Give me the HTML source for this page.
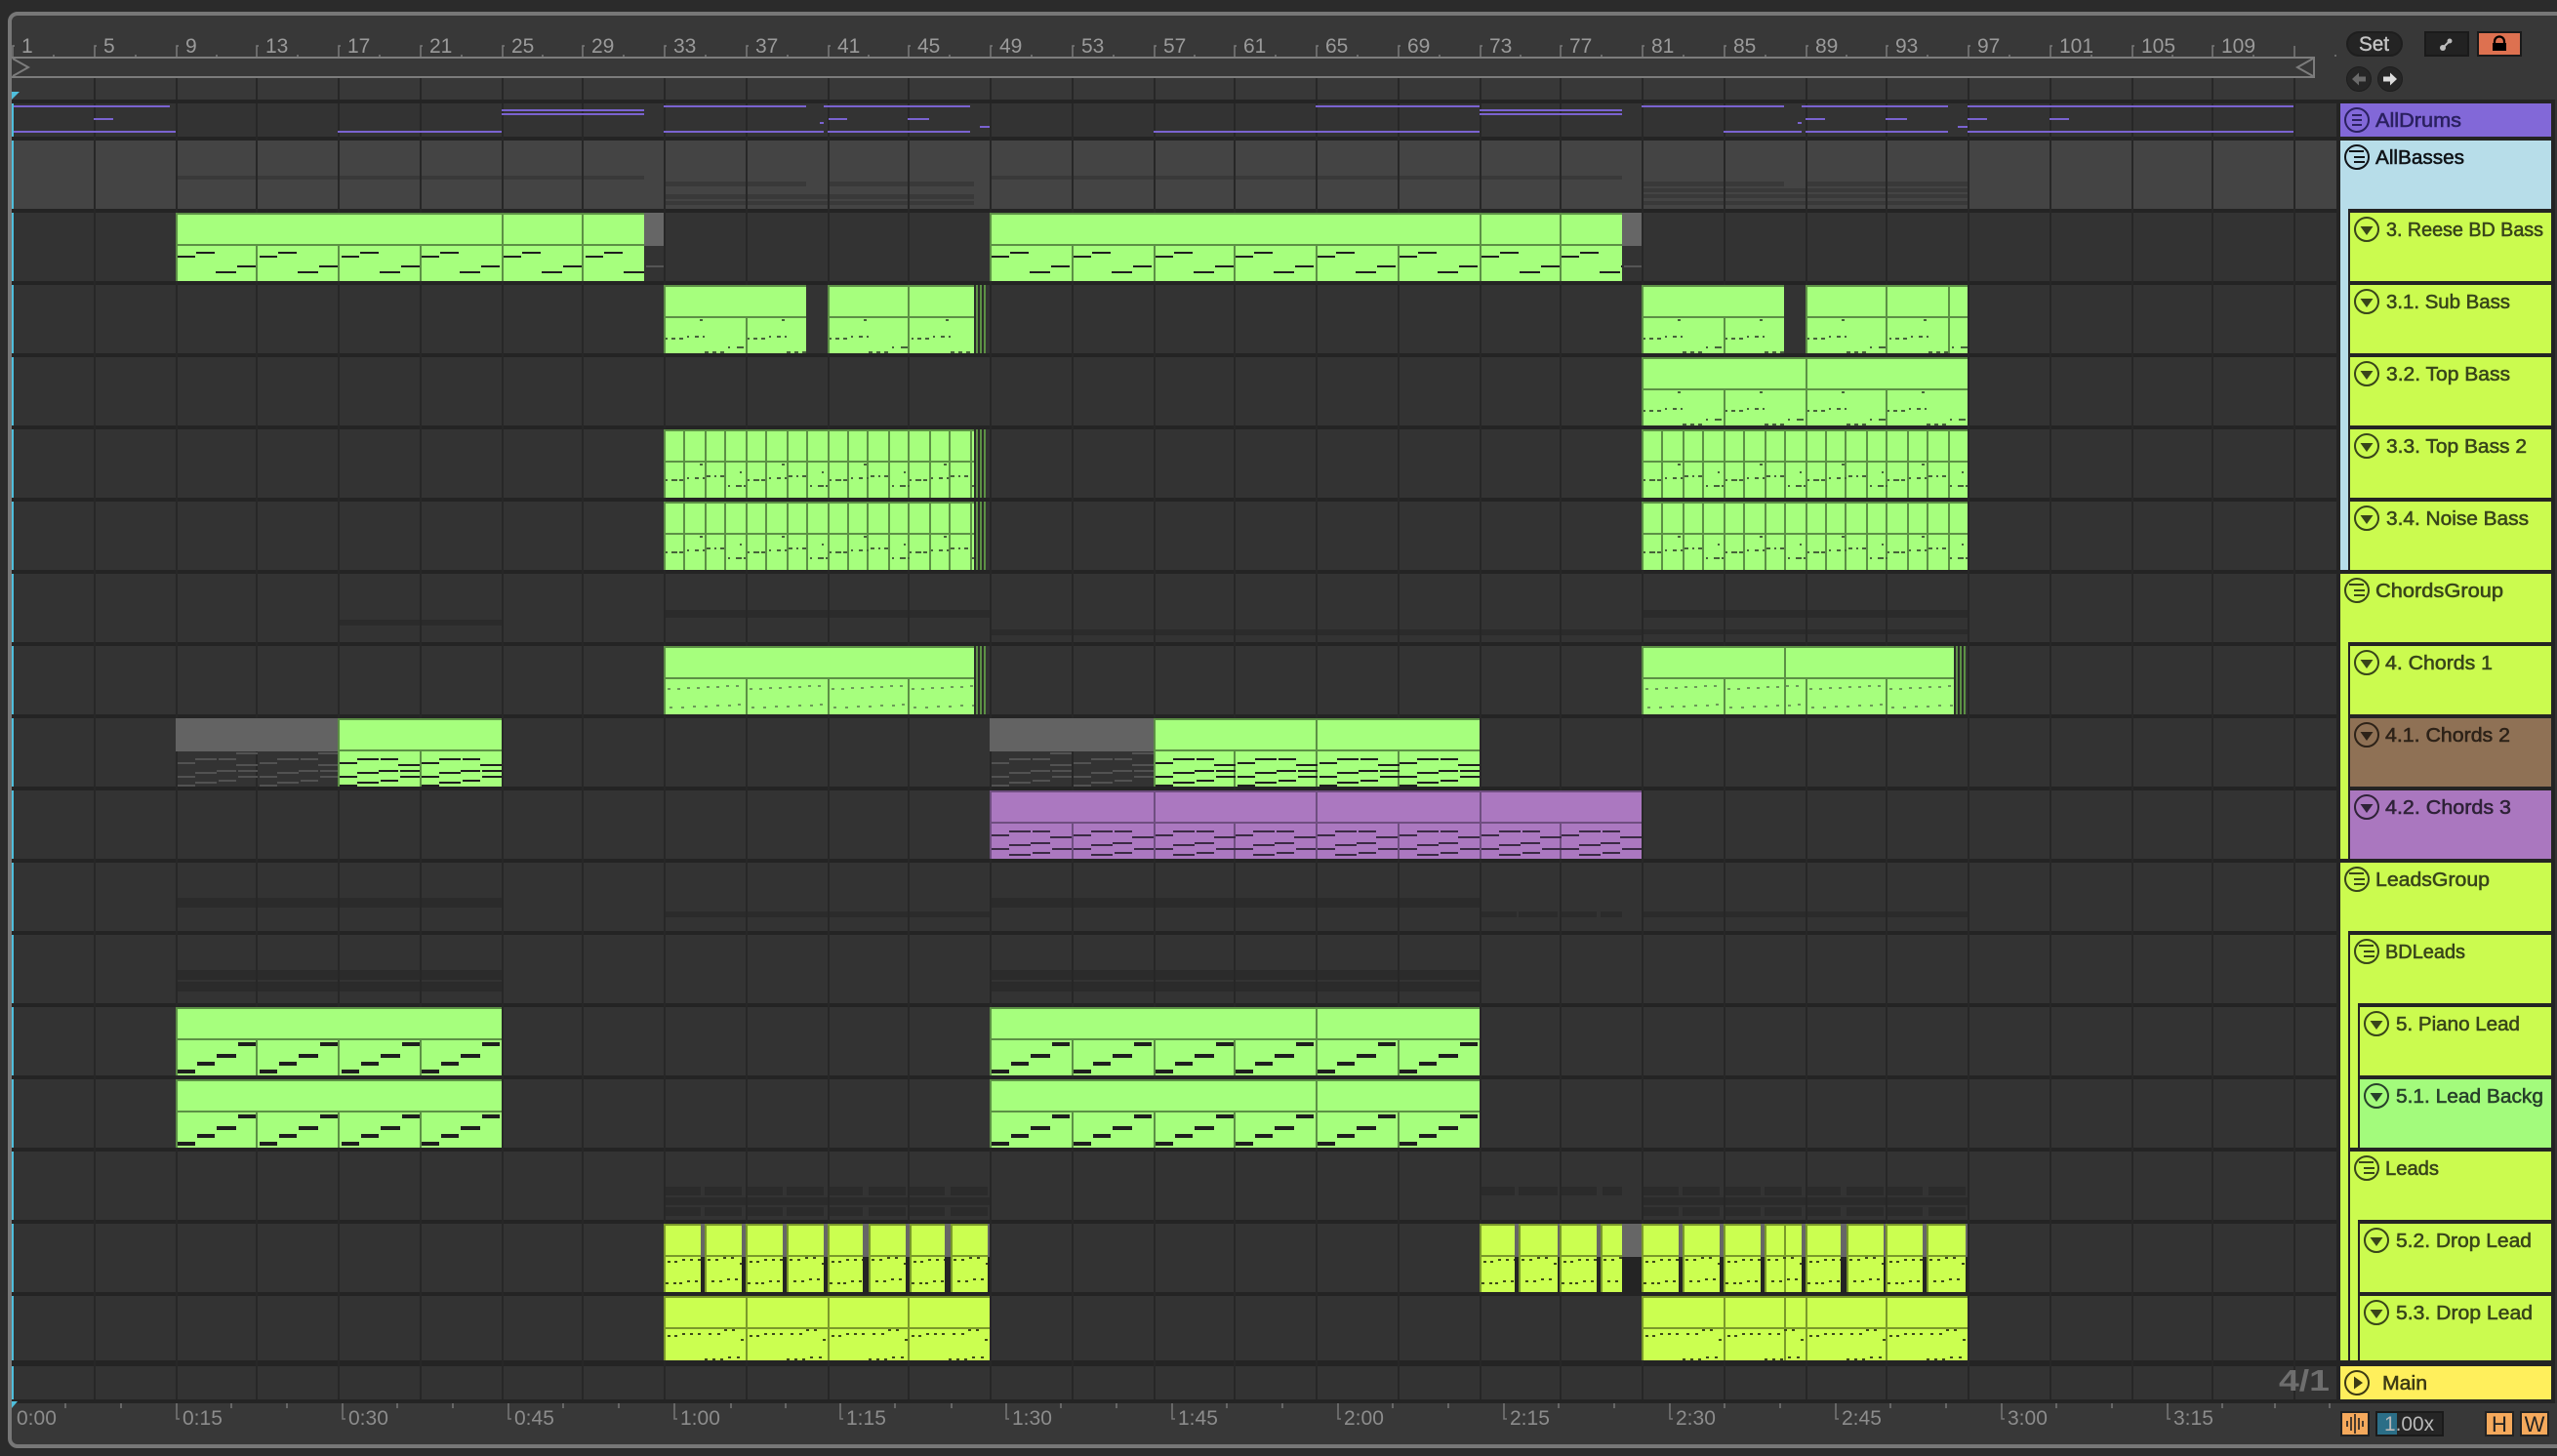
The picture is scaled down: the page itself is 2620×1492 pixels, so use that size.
<!DOCTYPE html>
<html lang="en"><head><meta charset="utf-8"><title>Arrangement</title>
<style>
html,body{margin:0;padding:0;background:#2b2b2b;width:2620px;height:1492px;overflow:hidden}
svg{display:block}
text{font-family:"Liberation Sans",sans-serif}
.g{--f:#a6ff7d;--b:#5c9045;--n:#1e1e1e;--s:#46633a;--e:#6b9a58}
.l{--f:#cbff50;--b:#7a9a2a;--n:#2a3312;--s:#3c4a18;--e:#3c4a18}
.p{--f:#ab78c0;--b:#6f4e80;--n:#3a2a44;--s:#2d2230;--e:#2d2230}
.x{--n:#525252;--s:#525252}
.f{fill:var(--f)}.b{fill:var(--b)}
path.v{fill:none;stroke:var(--b);stroke-width:2}
path.n{fill:none;stroke:var(--n);stroke-width:2}
path.n4{fill:none;stroke:var(--n);stroke-width:4}
path.s{fill:none;stroke:var(--s);stroke-width:2}
path.e{fill:none;stroke:var(--e);stroke-width:2}
.i{fill:none;stroke:currentColor;stroke-width:2}
.t{font-size:20px;font-weight:normal;stroke:currentColor;stroke-width:.55px}
.r{font-size:21px;fill:#9a9a9a}
.m{font-size:21px;fill:#8c8c8c}
.tl{color:#38451a;fill:#38451a}
</style></head><body>
<svg width="2620" height="1492" viewBox="0 0 2620 1492" xmlns="http://www.w3.org/2000/svg">
<defs>
<g id="c"><rect class="b" width="100%" height="100%"/><rect class="f" x="2" y="2" width="100%" height="30"/><rect class="f" x="2" y="34" width="100%" height="36"/></g>
<g id="a"><path id="a1" class="n" d="M2 45h18M21 41h19M41 61h21M63 55h19"/><use href="#a1" x="84"/><use href="#a1" x="168"/><use href="#a1" x="250"/><use href="#a1" x="334"/><use href="#a1" x="418"/><use href="#a1" x="502"/><use href="#a1" x="584"/></g>
<g id="h"><path id="h1" class="n" d="M20 42h22M44 42h18M2 46h18M62 48h22M42 54h20M20 56h22M64 54h20M2 60h18M64 60h20M44 64h18M20 66h22M2 69h18"/><use href="#h1" x="84"/><use href="#h1" x="168"/><use href="#h1" x="250"/><use href="#h1" x="334"/><use href="#h1" x="418"/><use href="#h1" x="502"/><use href="#h1" x="584"/></g>
<g id="hp"><path id="hp1" class="n" d="M20 42h22M44 42h18M2 46h18M62 48h22M42 54h20M20 56h22M2 60h18M64 60h20M44 64h18M20 66h22"/><use href="#hp1" x="84"/><use href="#hp1" x="168"/><use href="#hp1" x="250"/><use href="#hp1" x="334"/><use href="#hp1" x="418"/><use href="#hp1" x="502"/><use href="#hp1" x="584"/></g>
<g id="pn"><path id="p1" class="n4" d="M64 38h18M42 50h20M22 58h18M2 66h18"/><use href="#p1" x="84"/><use href="#p1" x="168"/><use href="#p1" x="250"/><use href="#p1" x="334"/><use href="#p1" x="418"/></g>
<g id="sp"><path id="s1" class="s" d="M2 55h2M8 55h4M16 55h4M24 53h2M32 53h4M40 53h2M66 64h2M75 64h7M42 69h4M50 69h4M58 69h4M37 36h3"/><use href="#s1" x="84"/><use href="#s1" x="168"/><use href="#s1" x="250"/></g>
<g id="tb"><path id="t1" class="s" d="M2 52h2M8 52h6M16 52h4M24 50h2M32 50h4M40 50h2M44 48h4M52 48h2M58 48h4M66 58h2M74 58h6M82 58h2M37 36h3M78 44h2"/><use href="#t1" x="84"/><use href="#t1" x="168"/><use href="#t1" x="250"/></g>
<g id="ch"><path id="e1" class="e" d="M4 44h3M14 44h3M24 43h3M34 43h3M44 42h3M54 42h3M64 41h3M74 41h3M6 63h3M18 63h3M30 62h3M42 62h3M54 61h3M66 61h3M76 60h3"/><use href="#e1" x="84"/><use href="#e1" x="168"/><use href="#e1" x="250"/></g>
<path id="d1" class="s" d="M4 39h3M11 39h3M19 37h3M27 37h3M35 37h3M2 61h3M10 61h3M16 61h3M24 59h3M32 59h3"/>
<path id="d2" class="s" d="M3 37h3M11 37h3M19 35h3M27 35h3M36 41h3M7 59h3M15 59h3M23 57h3M31 57h3"/>
<g id="q"><path id="q1" class="s" d="M4 41h3M11 41h3M19 39h3M27 39h3M35 39h3M46 39h3M55 39h3M62 35h3M70 35h3M79 45h3M42 65h3M50 65h3M58 65h3M66 63h3M75 63h3"/><use href="#q1" x="84"/><use href="#q1" x="168"/><use href="#q1" x="250"/></g>
<path id="v15" class="v" d="M21 2v68M43 2v68M63 2v68M85 2v68M105 2v68M127 2v68M147 2v68M169 2v68M189 2v68M209 2v68M231 2v68M251 2v68M273 2v68M293 2v68M315 2v68"/>
<g id="st"><rect width="12" height="70" fill="#2a2a2a"/><path d="M3 0v70M7 0v70M11 0v70" stroke="#5c9045" stroke-width="2" fill="none"/></g>
<g id="ig"><circle r="12" class="i"/><path class="i" d="M-8 -6h15M-3 0h11M-3 5h11"/></g>
<g id="ih"><circle r="12" class="i"/><path class="i" d="M-5 -5h10M-5 0h10M-5 5h10"/></g>
<g id="it"><circle r="12" class="i"/><path fill="currentColor" d="M-6.5 -3h13L0 6z"/></g>
<g id="im"><circle r="12" class="i"/><path fill="currentColor" d="M-3 -6.500L6 0L-3 6.500z"/></g>
</defs>

<rect width="2620" height="1492" fill="#2b2b2b"/>
<rect x="10" y="14" width="2700" height="1468" rx="8" fill="#383838" stroke="#777" stroke-width="4"/>

<!-- rows -->
<rect x="12" y="102" width="2382" height="1336" fill="#242424"/>
<path fill="#333" d="M14 106h2380v34H14zM14 218h2380v70H14zM14 292h2380v70H14zM14 366h2380v70H14zM14 440h2380v70H14zM14 514h2380v70H14zM14 588h2380v70H14zM14 662h2380v70H14zM14 736h2380v70H14zM14 810h2380v70H14zM14 884h2380v70H14zM14 958h2380v70H14zM14 1032h2380v70H14zM14 1106h2380v70H14zM14 1180h2380v70H14zM14 1254h2380v70H14zM14 1328h2380v66H14zM14 1400h2380v34H14z"/>
<rect x="14" y="144" width="2380" height="70" fill="#444"/>
<rect x="2618" y="102" width="2" height="1336" fill="#333"/>

<!-- group overlays -->
<g fill="#000" fill-opacity=".15">
<path d="M180 180h480v4H180zM1014 180h648v4h-648zM680 186h146v5H680zM848 186h150v5H848zM1682 186h146v5h-146zM1850 186h166v5h-166zM680 199h318v5H680zM680 206h318v4H680zM1682 193h334v4h-334zM1682 199h334v4h-334zM1682 206h334v4h-334z"/>
<path d="M346 635h168v6H346zM680 625h334v8H680zM1014 645h668v6h-668zM1682 625h334v8h-334zM1682 645h334v5h-334z"/>
<path d="M180 920h334v10H180zM1014 920h502v10h-502zM680 934h334v6H680zM1516 934h38v6h-38zM1556 934h40v6h-40zM1598 934h38v6h-38zM1640 934h22v6h-22zM1682 934h334v6h-334z"/>
<path d="M180 994h334v10H180zM180 1006h334v10H180zM1014 994h502v10h-502zM1014 1006h502v10h-502z"/>
<path d="M680 1227h334v8H680zM1682 1227h334v8h-334z"/>
<path id="ds" d="M680 1216h38v9h-38zM722 1216h38v9h-38zM764 1216h38v9h-38zM806 1216h38v9h-38zM848 1216h36v9h-36zM890 1216h38v9h-38zM932 1216h36v9h-36zM974 1216h38v9h-38z"/>
<use href="#ds" y="21"/>
<path d="M1516 1216h36v9h-36zM1556 1216h40v9h-40zM1598 1216h38v9h-38zM1642 1216h20v9h-20z"/>
<use href="#ds" x="1002"/><use href="#ds" x="1002" y="21"/>
</g>

<!-- grid -->
<path stroke="#272727" stroke-width="2" fill="none" d="M97 80V1434M181 80V1434M263 80V1434M347 80V1434M431 80V1434M515 80V1434M597 80V1434M681 80V1434M765 80V1434M849 80V1434M931 80V1434M1015 80V1434M1099 80V1434M1183 80V1434M1265 80V1434M1349 80V1434M1433 80V1434M1517 80V1434M1599 80V1434M1683 80V1434M1767 80V1434M1851 80V1434M1933 80V1434M2017 80V1434M2101 80V1434M2185 80V1434M2267 80V1434M2351 80V1434"/>
<rect y="102" x="12" width="2382" height="4" fill="#242424"/>
<rect y="1434" x="12" width="2382" height="4" fill="#242424"/>

<!-- playhead -->
<path d="M13 106V140M13 144V214M13 218V288M13 292V362M13 366V436M13 440V510M13 514V584M13 588V658M13 662V732M13 736V806M13 810V880M13 884V954M13 958V1028M13 1032V1102M13 1106V1176M13 1180V1250M13 1254V1324M13 1328V1394M13 1400V1434" stroke="#4fbfdc" stroke-width="2" fill="none"/>
<path d="M12 94h8l-8 8z" fill="#4fbfdc"/>
<path d="M12 1436h6l-6 7z" fill="#4fbfdc"/>

<!-- AllDrums overview -->
<g fill="#7a63d0">
<path d="M14 108h160v2H14zM680 108h146v2H680zM844 108h150v2H844zM1348 108h168v2h-168zM1682 108h146v2h-146zM1846 108h150v2h-150zM2016 108h334v2h-334zM2100 108h250v2h-250z"/>
<path d="M96 121h20v2H96zM849 121h19v2h-19zM930 121h22v2h-22zM1850 121h20v2h-20zM1932 121h22v2h-22zM2016 121h20v2h-20zM2100 121h20v2h-20z"/>
<path d="M840 125h4v2h-4zM1842 125h4v2h-4zM1004 129h10v2h-10zM2006 129h10v2h-10z"/>
<path d="M14 134h166v2H14zM346 134h168v2H346zM680 134h164v2H680zM848 134h146v2H848zM1182 134h334v2h-334zM1766 134h80v2h-80zM1850 134h146v2h-146zM2016 134h334v2h-334z"/>
<path d="M514 112h146v2H514zM514 116h146v2H514zM1516 112h146v2h-146zM1516 116h146v2h-146z"/>
</g>

<!-- R2 -->
<rect x="660" y="218" width="20" height="34" fill="#666"/><rect x="662" y="272" width="18" height="2" fill="#555"/>
<rect x="1662" y="218" width="20" height="34" fill="#666"/><rect x="1664" y="272" width="18" height="2" fill="#555"/>
<svg x="180" y="218" width="480" height="70" class="g"><use href="#c"/><path class="v" d="M335 2v32M417 2v32M83 34v36M167 34v36M251 34v36M335 34v36M417 34v36"/><use href="#a"/></svg>
<svg x="1014" y="218" width="648" height="70" class="g"><use href="#c"/><path class="v" d="M503 2v32M585 2v32M85 34v36M169 34v36M251 34v36M335 34v36M419 34v36M503 34v36M585 34v36"/><use href="#a"/></svg>
<!-- R3 -->
<svg x="680" y="292" width="146" height="70" class="g"><use href="#c"/><path class="v" d="M85 34v36"/><use href="#sp"/></svg>
<svg x="848" y="292" width="150" height="70" class="g"><use href="#c"/><path class="v" d="M83 2v68"/><use href="#sp"/></svg>
<use href="#st" x="998" y="292"/>
<svg x="1682" y="292" width="146" height="70" class="g"><use href="#c"/><path class="v" d="M85 34v36"/><use href="#sp"/></svg>
<svg x="1850" y="292" width="166" height="70" class="g"><use href="#c"/><path class="v" d="M83 2v68M147 2v68"/><use href="#sp"/></svg>
<!-- R4 -->
<svg x="1682" y="366" width="334" height="70" class="g"><use href="#c"/><path class="v" d="M169 2v68M85 34v36M251 34v36"/><use href="#sp"/></svg>
<!-- R5 R6 -->
<svg x="680" y="440" width="318" height="70" class="g"><use href="#c"/><use href="#v15"/><use href="#tb"/></svg>
<use href="#st" x="998" y="440"/>
<svg x="1682" y="440" width="334" height="70" class="g"><use href="#c"/><use href="#v15"/><use href="#tb"/></svg>
<svg x="680" y="514" width="318" height="70" class="g"><use href="#c"/><use href="#v15"/><use href="#tb"/></svg>
<use href="#st" x="998" y="514"/>
<svg x="1682" y="514" width="334" height="70" class="g"><use href="#c"/><use href="#v15"/><use href="#tb"/></svg>
<!-- R8 -->
<svg x="680" y="662" width="318" height="70" class="g"><use href="#c"/><path class="v" d="M85 34v36M169 34v36M251 34v36"/><use href="#ch"/></svg>
<use href="#st" x="998" y="662"/>
<svg x="1682" y="662" width="320" height="70" class="g"><use href="#c"/><path class="v" d="M147 2v68M85 34v36M169 34v36M251 34v36"/><use href="#ch"/></svg>
<use href="#st" x="2002" y="662"/>
<!-- R9 -->
<rect x="180" y="736" width="166" height="34" fill="#636363"/>
<svg x="180" y="736" width="166" height="70" class="x"><use href="#h"/><path class="n" d="M62 36h22M146 36h20"/></svg>
<svg x="346" y="736" width="168" height="70" class="g"><use href="#c"/><path class="v" d="M85 34v36"/><use href="#h"/></svg>
<rect x="1014" y="736" width="168" height="34" fill="#636363"/>
<svg x="1014" y="736" width="168" height="70" class="x"><use href="#h"/><path class="n" d="M62 36h22M146 36h22"/></svg>
<svg x="1182" y="736" width="334" height="70" class="g"><use href="#c"/><path class="v" d="M167 2v32M83 34v36M167 34v36M251 34v36"/><use href="#h"/></svg>
<!-- R10 -->
<svg x="1014" y="810" width="668" height="70" class="p"><use href="#c"/><path class="v" d="M169 2v32M335 2v32M503 2v32M85 34v36M169 34v36M251 34v36M335 34v36M419 34v36M503 34v36M585 34v36"/><use href="#hp"/></svg>
<!-- R13 R14 -->
<svg x="180" y="1032" width="334" height="70" class="g"><use href="#c"/><path class="v" d="M83 34v36M167 34v36M251 34v36"/><use href="#pn"/></svg>
<svg x="1014" y="1032" width="502" height="70" class="g"><use href="#c"/><path class="v" d="M335 2v32M85 34v36M169 34v36M251 34v36M335 34v36M419 34v36"/><use href="#pn"/></svg>
<svg x="180" y="1106" width="334" height="70" class="g"><use href="#c"/><path class="v" d="M83 34v36M167 34v36M251 34v36"/><use href="#pn"/></svg>
<svg x="1014" y="1106" width="502" height="70" class="g"><use href="#c"/><path class="v" d="M335 2v32M85 34v36M169 34v36M251 34v36M335 34v36M419 34v36"/><use href="#pn"/></svg>
<!-- R16 -->
<rect x="680" y="1254" width="334" height="34" fill="#666"/><rect x="680" y="1288" width="334" height="36" fill="#242424"/>
<rect x="1516" y="1254" width="500" height="34" fill="#666"/><rect x="1516" y="1288" width="500" height="36" fill="#242424"/>
<g class="l">
<svg x="680" y="1254" width="38" height="70"><use href="#c"/><use href="#d1"/></svg>
<svg x="722" y="1254" width="38" height="70"><use href="#c"/><use href="#d2"/></svg>
<svg x="764" y="1254" width="38" height="70"><use href="#c"/><use href="#d1"/></svg>
<svg x="806" y="1254" width="38" height="70"><use href="#c"/><use href="#d2"/></svg>
<svg x="848" y="1254" width="36" height="70"><use href="#c"/><use href="#d1"/></svg>
<svg x="890" y="1254" width="38" height="70"><use href="#c"/><use href="#d2"/></svg>
<svg x="932" y="1254" width="36" height="70"><use href="#c"/><use href="#d1"/></svg>
<svg x="974" y="1254" width="38" height="70"><use href="#c"/><use href="#d2"/></svg>
<svg x="1516" y="1254" width="36" height="70"><use href="#c"/><use href="#d1"/></svg>
<svg x="1556" y="1254" width="40" height="70"><use href="#c"/><use href="#d2"/></svg>
<svg x="1598" y="1254" width="38" height="70"><use href="#c"/><use href="#d1"/></svg>
<svg x="1640" y="1254" width="22" height="70"><use href="#c"/><use href="#d2"/></svg>
<svg x="1682" y="1254" width="38" height="70"><use href="#c"/><use href="#d1"/></svg>
<svg x="1724" y="1254" width="38" height="70"><use href="#c"/><use href="#d2"/></svg>
<svg x="1766" y="1254" width="38" height="70"><use href="#c"/><use href="#d1"/></svg>
<svg x="1808" y="1254" width="38" height="70"><use href="#c"/><path class="v" d="M21 2v68"/><use href="#d2"/></svg>
<svg x="1850" y="1254" width="36" height="70"><use href="#c"/><use href="#d1"/></svg>
<svg x="1892" y="1254" width="38" height="70"><use href="#c"/><use href="#d2"/></svg>
<svg x="1932" y="1254" width="38" height="70"><use href="#c"/><use href="#d1"/></svg>
<svg x="1974" y="1254" width="40" height="70"><use href="#c"/><use href="#d2"/></svg>
</g>
<!-- R17 -->
<svg x="680" y="1328" width="334" height="66" class="l"><use href="#c"/><path class="v" d="M85 2v64M169 2v64M251 2v64"/><use href="#q"/></svg>
<svg x="1682" y="1328" width="334" height="66" class="l"><use href="#c"/><path class="v" d="M85 2v64M147 2v64M169 2v64M251 2v64"/><use href="#q"/></svg>

<!-- top ruler -->
<path stroke="#7a7a7a" stroke-width="1.500" fill="none" d="M13 58V47h2M97 58V47h2M181 58V47h2M263 58V47h2M347 58V47h2M431 58V47h2M515 58V47h2M597 58V47h2M681 58V47h2M765 58V47h2M849 58V47h2M931 58V47h2M1015 58V47h2M1099 58V47h2M1183 58V47h2M1265 58V47h2M1349 58V47h2M1433 58V47h2M1517 58V47h2M1599 58V47h2M1683 58V47h2M1767 58V47h2M1851 58V47h2M1933 58V47h2M2017 58V47h2M2101 58V47h2M2185 58V47h2M2267 58V47h2M2351 58V47"/>
<path stroke="#7a7a7a" stroke-width="1.500" fill="none" d="M55 58v-2M139 58v-2M222 58v-2M305 58v-2M389 58v-2M473 58v-2M556 58v-2M639 58v-2M723 58v-2M807 58v-2M890 58v-2M973 58v-2M1057 58v-2M1141 58v-2M1224 58v-2M1307 58v-2M1391 58v-2M1475 58v-2M1558 58v-2M1641 58v-2M1725 58v-2M1809 58v-2M1892 58v-2M1975 58v-2M2059 58v-2M2143 58v-2M2226 58v-2M2309 58v-2M2393 58v-2"/>
<g class="r">
<text x="22" y="54">1</text><text x="106" y="54">5</text><text x="190" y="54">9</text><text x="272" y="54">13</text><text x="356" y="54">17</text><text x="440" y="54">21</text><text x="524" y="54">25</text><text x="606" y="54">29</text><text x="690" y="54">33</text><text x="774" y="54">37</text><text x="858" y="54">41</text><text x="940" y="54">45</text><text x="1024" y="54">49</text><text x="1108" y="54">53</text><text x="1192" y="54">57</text><text x="1274" y="54">61</text><text x="1358" y="54">65</text><text x="1442" y="54">69</text><text x="1526" y="54">73</text><text x="1608" y="54">77</text><text x="1692" y="54">81</text><text x="1776" y="54">85</text><text x="1860" y="54">89</text><text x="1942" y="54">93</text><text x="2026" y="54">97</text><text x="2110" y="54">101</text><text x="2194" y="54">105</text><text x="2276" y="54">109</text>
</g>
<path d="M12 59H2371V79H12" stroke="#7c7c7c" stroke-width="2" fill="none"/>
<path d="M13 60L29 69L13 78" stroke="#7c7c7c" stroke-width="2" fill="none"/>
<path d="M2370 60L2354 69L2370 78" stroke="#7c7c7c" stroke-width="2" fill="none"/>

<!-- bottom ruler -->
<path stroke="#777" stroke-width="1.500" fill="none" d="M181 1438V1454h3M351 1438V1454h3M521 1438V1454h3M691 1438V1454h3M861 1438V1454h3M1031 1438V1454h3M1201 1438V1454h3M1371 1438V1454h3M1541 1438V1454h3M1711 1438V1454h3M1881 1438V1454h3M2051 1438V1454h3M2221 1438V1454h3"/>
<path stroke="#777" stroke-width="1.500" fill="none" d="M67 1438v5M124 1438v5M237 1438v5M294 1438v5M407 1438v5M464 1438v5M577 1438v5M634 1438v5M749 1438v5M805 1438v5M917 1438v5M975 1438v5M1087 1438v5M1144 1438v5M1257 1438v5M1314 1438v5M1427 1438v5M1484 1438v5M1597 1438v5M1654 1438v5M1767 1438v5M1824 1438v5M1937 1438v5M1994 1438v5M2107 1438v5M2164 1438v5M2277 1438v5M2331 1438v5M2387 1438v5"/>
<g class="m">
<text x="17" y="1460">0:00</text><text x="187" y="1460">0:15</text><text x="357" y="1460">0:30</text><text x="527" y="1460">0:45</text><text x="697" y="1460">1:00</text><text x="867" y="1460">1:15</text><text x="1037" y="1460">1:30</text><text x="1207" y="1460">1:45</text><text x="1377" y="1460">2:00</text><text x="1547" y="1460">2:15</text><text x="1717" y="1460">2:30</text><text x="1887" y="1460">2:45</text><text x="2057" y="1460">3:00</text><text x="2227" y="1460">3:15</text>
</g>
<text x="2335" y="1425" font-size="31" font-weight="bold" fill="#6e6e6e" textLength="52" lengthAdjust="spacingAndGlyphs">4/1</text>

<!-- header panel -->
<rect x="2394" y="102" width="224" height="1336" fill="#242424"/>
<rect x="2398" y="106" width="216" height="34" fill="#8268d8"/>
<rect x="2398" y="144" width="216" height="440" fill="#b7dde9"/>
<rect x="2406" y="214" width="208" height="370" fill="#242424"/>
<rect x="2398" y="588" width="216" height="292" fill="#cbfb4f"/>
<rect x="2406" y="658" width="208" height="222" fill="#242424"/>
<rect x="2398" y="884" width="216" height="510" fill="#cbfb4f"/>
<rect x="2406" y="954" width="208" height="440" fill="#242424"/>
<path fill="#cbfb4f" d="M2408 218h206v70h-206zM2408 292h206v70h-206zM2408 366h206v70h-206zM2408 440h206v70h-206zM2408 514h206v70h-206zM2408 662h206v70h-206zM2408 958h206v218h-206zM2408 1180h206v214h-206z"/>
<rect x="2408" y="736" width="206" height="70" fill="#8f7155"/>
<rect x="2408" y="810" width="206" height="70" fill="#aa77bf"/>
<rect x="2416" y="1028" width="198" height="148" fill="#242424"/>
<rect x="2416" y="1250" width="198" height="144" fill="#242424"/>
<rect x="2418" y="1032" width="196" height="70" fill="#cbfb4f"/>
<rect x="2418" y="1106" width="196" height="70" fill="#a3fb7c"/>
<rect x="2418" y="1254" width="196" height="70" fill="#cbfb4f"/>
<rect x="2418" y="1328" width="196" height="66" fill="#cbfb4f"/>
<rect x="2398" y="1400" width="216" height="34" fill="#ffef5c"/>

<g style="color:#2b2160;fill:#2b2160"><use href="#ih" x="2415" y="123"/><text class="t" x="2434" y="130" textLength="88" lengthAdjust="spacingAndGlyphs">AllDrums</text></g>
<g style="color:#101418;fill:#101418"><use href="#ig" x="2415" y="161"/><text class="t" x="2434" y="168" textLength="91" lengthAdjust="spacingAndGlyphs">AllBasses</text></g>
<g class="tl">
<use href="#it" x="2425" y="235"/><text class="t" x="2445" y="242" textLength="161" lengthAdjust="spacingAndGlyphs">3. Reese BD Bass</text>
<use href="#it" x="2425" y="309"/><text class="t" x="2445" y="316" textLength="127" lengthAdjust="spacingAndGlyphs">3.1. Sub Bass</text>
<use href="#it" x="2425" y="383"/><text class="t" x="2445" y="390" textLength="127" lengthAdjust="spacingAndGlyphs">3.2. Top Bass</text>
<use href="#it" x="2425" y="457"/><text class="t" x="2445" y="464" textLength="144" lengthAdjust="spacingAndGlyphs">3.3. Top Bass 2</text>
<use href="#it" x="2425" y="531"/><text class="t" x="2445" y="538" textLength="146" lengthAdjust="spacingAndGlyphs">3.4. Noise Bass</text>
<use href="#ig" x="2415" y="605"/><text class="t" x="2434" y="612" textLength="131" lengthAdjust="spacingAndGlyphs">ChordsGroup</text>
<use href="#it" x="2425" y="679"/><text class="t" x="2444" y="686" textLength="110" lengthAdjust="spacingAndGlyphs">4. Chords 1</text>
<use href="#ig" x="2415" y="901"/><text class="t" x="2434" y="908" textLength="117" lengthAdjust="spacingAndGlyphs">LeadsGroup</text>
<use href="#ig" x="2425" y="975"/><text class="t" x="2444" y="982" textLength="82" lengthAdjust="spacingAndGlyphs">BDLeads</text>
<use href="#it" x="2435" y="1049"/><text class="t" x="2455" y="1056" textLength="127" lengthAdjust="spacingAndGlyphs">5. Piano Lead</text>
<use href="#ig" x="2425" y="1197"/><text class="t" x="2444" y="1204" textLength="55" lengthAdjust="spacingAndGlyphs">Leads</text>
<use href="#it" x="2435" y="1271"/><text class="t" x="2455" y="1278" textLength="139" lengthAdjust="spacingAndGlyphs">5.2. Drop Lead</text>
<use href="#it" x="2435" y="1345"/><text class="t" x="2455" y="1352" textLength="140" lengthAdjust="spacingAndGlyphs">5.3. Drop Lead</text>
</g>
<g style="color:#2d2218;fill:#2d2218"><use href="#it" x="2425" y="753"/><text class="t" x="2444" y="760" textLength="128" lengthAdjust="spacingAndGlyphs">4.1. Chords 2</text></g>
<g style="color:#2f2238;fill:#2f2238"><use href="#it" x="2425" y="827"/><text class="t" x="2444" y="834" textLength="129" lengthAdjust="spacingAndGlyphs">4.2. Chords 3</text></g>
<g style="color:#27402a;fill:#27402a"><use href="#it" x="2435" y="1123"/><text class="t" x="2455" y="1130" textLength="151" lengthAdjust="spacingAndGlyphs">5.1. Lead Backg</text></g>
<g style="color:#3d3a14;fill:#3d3a14"><use href="#im" x="2415" y="1417"/><text class="t" x="2441" y="1424" textLength="46" lengthAdjust="spacingAndGlyphs">Main</text></g>

<!-- top right buttons -->
<rect x="2405" y="33" width="56" height="24" rx="12" fill="#242424" stroke="#1e1e1e" stroke-width="2"/>
<text x="2417" y="52" font-size="21" fill="#c4c4c4" stroke="#c4c4c4" stroke-width=".4" textLength="31" lengthAdjust="spacingAndGlyphs">Set</text>
<rect x="2485" y="33" width="44" height="24" fill="#222" stroke="#1a1a1a" stroke-width="2"/>
<path d="M2503 49L2510 42" stroke="#bbb" stroke-width="2" fill="none"/><circle cx="2503" cy="49" r="3" fill="#bbb"/><circle cx="2510" cy="42" r="2.500" fill="#bbb"/>
<rect x="2539" y="33" width="44" height="24" fill="#dd7150" stroke="#1a1a1a" stroke-width="2"/>
<rect x="2554" y="44" width="14" height="8" fill="#000"/><path d="M2556 44v-1.500a5 5 0 0 1 10 0V44" stroke="#000" stroke-width="2.200" fill="none"/>
<circle cx="2417" cy="81" r="12.500" fill="#262626" stroke="#1e1e1e" stroke-width="1"/>
<circle cx="2449" cy="81" r="12.500" fill="#262626" stroke="#1e1e1e" stroke-width="1"/>
<path d="M2410 81l7-6.500v4h7v5h-7v4z" fill="#6a6a6a"/>
<path d="M2456 81l-7-6.500v4h-7v5h7v4z" fill="#dcdcdc"/>

<!-- bottom right buttons -->
<rect x="2399" y="1447" width="28" height="24" fill="#f5a95c" stroke="#222" stroke-width="2"/>
<path d="M2405 1456v6M2409 1452v14M2413 1449v20M2417 1453v12M2421 1456v6" stroke="#222" stroke-width="1.600" fill="none"/>
<rect x="2435" y="1447" width="68" height="24" fill="#252525" stroke="#1a1a1a" stroke-width="2"/>
<rect x="2436" y="1448" width="20" height="22" fill="#2b6e87"/>
<text x="2443" y="1466" font-size="21" fill="#b8b8b8" textLength="51" lengthAdjust="spacingAndGlyphs">1.00x</text>
<rect x="2547" y="1447" width="28" height="24" fill="#f5a95c" stroke="#222" stroke-width="2"/>
<text x="2561" y="1467" font-size="22" fill="#222" text-anchor="middle">H</text>
<rect x="2583" y="1447" width="28" height="24" fill="#f5a95c" stroke="#222" stroke-width="2"/>
<text x="2597" y="1467" font-size="22" fill="#222" text-anchor="middle">W</text>
</svg>
</body></html>
